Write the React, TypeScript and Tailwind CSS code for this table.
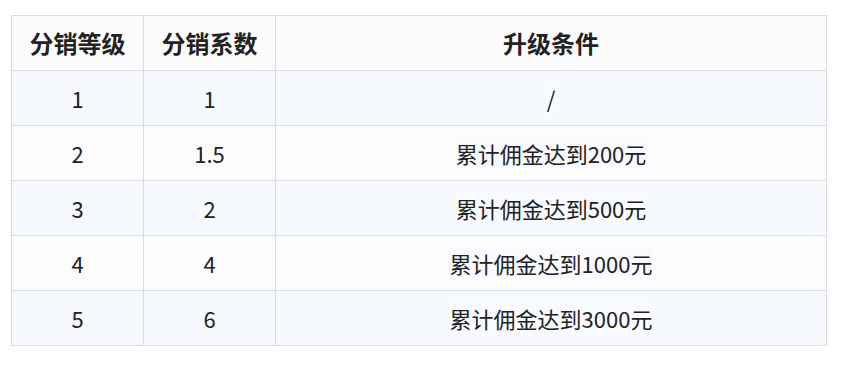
import React from 'react';

const rows = [
  { level: '1', ratio: '1', cond: '/' },
  { level: '2', ratio: '1.5', cond: '累计佣金达到200元' },
  { level: '3', ratio: '2', cond: '累计佣金达到500元' },
  { level: '4', ratio: '4', cond: '累计佣金达到1000元' },
  { level: '5', ratio: '6', cond: '累计佣金达到3000元' },
];

export default function App() {
  return (
    <div className="min-h-screen bg-white pl-[11px] pt-[15px] font-['Noto_Sans_CJK_SC','Noto_Sans',sans-serif] text-[#222]">
      <table className="w-[816px] border-collapse border border-[#dcdcdc] text-center">
        <thead>
          <tr className="h-[55px] bg-[#fbfbfb]">
            <th className="w-[132px] border border-[#dcdcdc] text-[24px] font-bold">分销等级</th>
            <th className="w-[132px] border border-[#dcdcdc] text-[24px] font-bold">分销系数</th>
            <th className="border border-[#dcdcdc] text-[24px] font-bold">升级条件</th>
          </tr>
        </thead>
        <tbody>
          {rows.map((r, i) => (
            <tr key={r.level} className={`h-[55px] ${i % 2 === 0 ? 'bg-[#f6f9fe]' : 'bg-[#fcfcfc]'}`}>
              <td className="border border-[#dcdcdc] text-[22px]">{r.level}</td>
              <td className="border border-[#dcdcdc] text-[22px]">{r.ratio}</td>
              <td className="border border-[#dcdcdc] text-[22px]">
                <span className="bg-[#f8faff]">{r.cond}</span>
              </td>
            </tr>
          ))}
        </tbody>
      </table>
    </div>
  );
}
